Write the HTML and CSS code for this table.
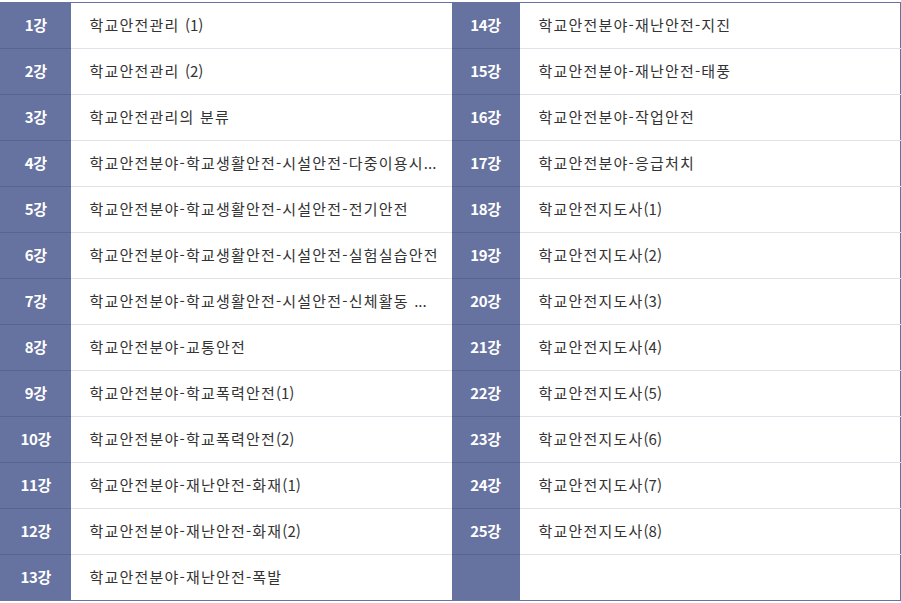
FILE: index.html
```html
<!DOCTYPE html>
<html lang="ko">
<head>
<meta charset="utf-8">
<link rel="stylesheet" href="styles.css">
</head>
<body>
<table class="lectures">
  <colgroup>
    <col class="c-num-l"><col class="c-title"><col class="c-num-r"><col class="c-title">
  </colgroup>
  <tbody>
    <tr><th>1강</th><td>학교안전관리 <span class="n">(1)</span></td><th>14강</th><td>학교안전분야-재난안전-지진</td></tr>
    <tr><th>2강</th><td>학교안전관리 <span class="n">(2)</span></td><th>15강</th><td>학교안전분야-재난안전-태풍</td></tr>
    <tr><th>3강</th><td>학교안전관리의 분류</td><th>16강</th><td>학교안전분야-작업안전</td></tr>
    <tr><th>4강</th><td>학교안전분야-학교생활안전-시설안전-다중이용시<span class="n">...</span></td><th>17강</th><td>학교안전분야-응급처치</td></tr>
    <tr><th>5강</th><td>학교안전분야-학교생활안전-시설안전-전기안전</td><th>18강</th><td>학교안전지도사<span class="n">(1)</span></td></tr>
    <tr><th>6강</th><td>학교안전분야-학교생활안전-시설안전-실험실습안전</td><th>19강</th><td>학교안전지도사<span class="n">(2)</span></td></tr>
    <tr><th>7강</th><td>학교안전분야-학교생활안전-시설안전-신체활동 <span class="n">...</span></td><th>20강</th><td>학교안전지도사<span class="n">(3)</span></td></tr>
    <tr><th>8강</th><td>학교안전분야-교통안전</td><th>21강</th><td>학교안전지도사<span class="n">(4)</span></td></tr>
    <tr><th>9강</th><td>학교안전분야-학교폭력안전<span class="n">(1)</span></td><th>22강</th><td>학교안전지도사<span class="n">(5)</span></td></tr>
    <tr><th>10강</th><td>학교안전분야-학교폭력안전<span class="n">(2)</span></td><th>23강</th><td>학교안전지도사<span class="n">(6)</span></td></tr>
    <tr><th>11강</th><td>학교안전분야-재난안전-화재<span class="n">(1)</span></td><th>24강</th><td>학교안전지도사<span class="n">(7)</span></td></tr>
    <tr><th>12강</th><td>학교안전분야-재난안전-화재<span class="n">(2)</span></td><th>25강</th><td>학교안전지도사<span class="n">(8)</span></td></tr>
    <tr><th>13강</th><td>학교안전분야-재난안전-폭발</td><th></th><td></td></tr>
  </tbody>
</table>
</body>
</html>
```
FILE: styles.css
```css
html, body {
  margin: 0;
  padding: 0;
  background: #ffffff;
}
body {
  padding-top: 2px;
  font-family: "Noto Sans CJK KR", "Noto Sans", sans-serif;
}
.lectures {
  width: 901px;
  border-collapse: collapse;
  table-layout: fixed;
  border: 1px solid #6672a0;
}
.c-num-l { width: 70px; }
.c-num-r { width: 68px; }
.lectures tr { height: 46px; }
.lectures th {
  background: #6672a0;
  color: #ffffff;
  font-size: 15px;
  font-weight: 700;
  text-align: center;
  padding: 0 0 2px 0;
  border-bottom: 1px solid #58638f;
  letter-spacing: -0.3px;
  line-height: 20px;
}
.lectures td {
  padding: 0 8px 2px 19px;
  font-size: 15px;
  line-height: 20px;
  letter-spacing: 1.2px;
  color: #333333;
  border-bottom: 1px solid #e2e2ea;
  white-space: nowrap;
  overflow: hidden;
}
.lectures td .n {
  letter-spacing: 0;
}
.lectures tr:last-child th,
.lectures tr:last-child td {
  border-bottom: 1px solid #6672a0;
}
```
